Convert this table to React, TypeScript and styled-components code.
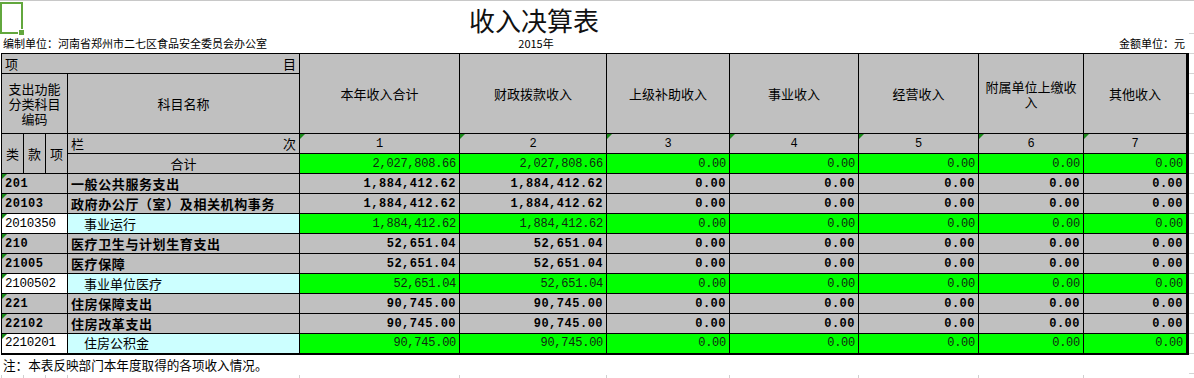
import styled, { createGlobalStyle } from "styled-components";

const GREY = "#c0c0c0";
const GREEN = "#00ff00";
const CYAN = "#ccffff";
const WHITE = "#ffffff";
const CJK = `"Noto Sans CJK SC", "Liberation Sans", sans-serif`;
const MONO = `"Liberation Mono", "Noto Sans CJK SC", monospace`;

const colWidths = [22, 22, 22, 232, 160, 147, 123, 129, 120, 105, 104];

const headers = [
    ["本年收入合计"],
    ["财政拨款收入"],
    ["上级补助收入"],
    ["事业收入"],
    ["经营收入"],
    ["附属单位上缴收", "入"],
    ["其他收入"],
];

type Row = {
    code: string;
    name: string;
    amount: string;
    leaf?: boolean;
};

const rows: Row[] = [
    {code: "201", name: "一般公共服务支出", amount: "1,884,412.62"},
    {code: "20103", name: "政府办公厅（室）及相关机构事务", amount: "1,884,412.62"},
    {code: "2010350", name: "事业运行", amount: "1,884,412.62", leaf: true},
    {code: "210", name: "医疗卫生与计划生育支出", amount: "52,651.04"},
    {code: "21005", name: "医疗保障", amount: "52,651.04"},
    {code: "2100502", name: "事业单位医疗", amount: "52,651.04", leaf: true},
    {code: "221", name: "住房保障支出", amount: "90,745.00"},
    {code: "22102", name: "住房改革支出", amount: "90,745.00"},
    {code: "2210201", name: "住房公积金", amount: "90,745.00", leaf: true},
];

const rowValues = (amount: string) => [amount, amount, "0.00", "0.00", "0.00", "0.00", "0.00"];

export default function App() {
    return (
        <>
            <GlobalStyle/>
            <Page>
                <Main>
                    <Selection/>
                    <Heading>
                        <span/>
                        <Title>收入决算表</Title>
                        <span/>
                    </Heading>
                    <Info>
                        <span>编制单位：河南省郑州市二七区食品安全委员会办公室</span>
                        <Year>2015年</Year>
                        <Unit>金额单位：元</Unit>
                    </Info>
                    <Sheet>
                        <colgroup>
                            {colWidths.map((w, i) => <Col key={i} $w={w}/>)}
                        </colgroup>
                        <tbody>
                        <Row $h={20}>
                            <Cell colSpan={4}>
                                <Split><span>项</span><span>目</span></Split>
                            </Cell>
                            {headers.map((h, i) => (
                                <Cell key={i} rowSpan={2} $align="center">
                                    <HeadText>
                                        {h.map((line, j) => <HeadLine key={j}>{line}</HeadLine>)}
                                    </HeadText>
                                </Cell>
                            ))}
                        </Row>
                        <Row $h={60}>
                            <Cell colSpan={3} $align="center">
                                <HeadText>
                                    <HeadLine>支出功能</HeadLine>
                                    <HeadLine>分类科目</HeadLine>
                                    <HeadLine>编码</HeadLine>
                                </HeadText>
                            </Cell>
                            <Cell $align="center">科目名称</Cell>
                        </Row>
                        <Row $h={20}>
                            <Cell rowSpan={2} $align="center" $tight>类</Cell>
                            <Cell rowSpan={2} $align="center" $tight>款</Cell>
                            <Cell rowSpan={2} $align="center" $tight>项</Cell>
                            <Cell>
                                <Split><span>栏</span><span>次</span></Split>
                            </Cell>
                            {headers.map((_, i) => (
                                <Cell key={i} $align="center" $mono $mark>{i + 1}</Cell>
                            ))}
                        </Row>
                        <Row $h={20}>
                            <Cell $align="center">合计</Cell>
                            {rowValues("2,027,808.66").map((v, i) => (
                                <Cell key={i} $bg={GREEN} $align="right" $mono $ink="#102810">{v}</Cell>
                            ))}
                        </Row>
                        {rows.map((r) => (
                            <Row $h={20} key={r.code}>
                                <Cell colSpan={3} $bg={r.leaf ? WHITE : GREY} $mono $bold={!r.leaf} $mark $big={r.leaf}>
                                    {r.code}
                                </Cell>
                                <Cell $bg={r.leaf ? CYAN : GREY} $bold={!r.leaf} $indent={r.leaf ? 16 : 3}>
                                    {r.name}
                                </Cell>
                                {rowValues(r.amount).map((v, i) => (
                                    <Cell key={i}
                                          $bg={r.leaf ? GREEN : GREY}
                                          $align="right"
                                          $mono
                                          $bold={!r.leaf}
                                          $ink={r.leaf ? "#102810" : "#000"}
                                    >
                                        {v}
                                    </Cell>
                                ))}
                            </Row>
                        ))}
                        </tbody>
                    </Sheet>
                    <Note>注：本表反映部门本年度取得的各项收入情况。</Note>
                    <Ticks>
                        {colWidths.map((_, i) => <Tick key={i}/>)}
                    </Ticks>
                </Main>
                <Margin/>
            </Page>
        </>
    );
}

const GlobalStyle = createGlobalStyle`
    html, body {
        margin: 0;
        padding: 0;
        background: #fff;
    }
    body {
        font-family: ${CJK};
        color: #000;
    }
`

const Page = styled.div`
    display: flex;
    width: 1194px;
    height: 378px;
    overflow: hidden;
    border-top: 1px solid #c8c8c8;
    box-sizing: border-box;
`

const Main = styled.div`
    position: relative;
    width: 1189px;
    flex-shrink: 0;
    padding-left: 1px;
    box-sizing: border-box;
`

const Margin = styled.div`
    flex: 1;
    background: repeating-linear-gradient(to bottom, transparent 0 19px, #d4d4d4 19px 20px);
    background-position: 0 13px;
`

const Selection = styled.div`
    position: absolute;
    left: 0;
    top: 1px;
    width: 19px;
    height: 28px;
    border: 2px solid #62a73d;

    &::after {
        content: "";
        position: absolute;
        right: -4px;
        bottom: -4px;
        width: 5px;
        height: 5px;
        background: #62a73d;
        border: 1px solid #fff;
    }
`

const Heading = styled.div`
    display: grid;
    grid-template-columns: 399px 268px 1fr;
    height: 32px;
    padding-top: 1px;
    box-sizing: border-box;
`

const Title = styled.div`
    font-size: 26px;
    line-height: 38px;
    height: 31px;
    margin-top: -1px;
    text-align: center;
    font-weight: 400;
    color: #111;
`

const Info = styled.div`
    display: grid;
    grid-template-columns: 399px 268px 1fr;
    height: 20px;
    align-items: center;
    font-size: 11px;
    padding-left: 2px;
    padding-right: 4px;
`

const Year = styled.span`
    text-align: center;
`

const Unit = styled.span`
    text-align: right;
`

const Sheet = styled.table`
    border-collapse: collapse;
    table-layout: fixed;
    width: 1186px;
    border-right: 3px solid #000;
    border-bottom: 2px solid #000;
`

const Col = styled.col<{ $w: number }>`
    width: ${p => p.$w}px;
`

const Row = styled.tr<{ $h: number }>`
    height: ${p => p.$h}px;
`

const Cell = styled.td<{
    $bg?: string;
    $align?: "left" | "center" | "right";
    $bold?: boolean;
    $mono?: boolean;
    $indent?: number;
    $mark?: boolean;
    $ink?: string;
    $tight?: boolean;
    $big?: boolean;
}>`
    position: relative;
    border: 1px solid #000;
    padding-top: 0;
    padding-bottom: 0;
    padding-left: ${p => p.$tight ? 0 : (p.$indent ?? 3)}px;
    padding-right: ${p => p.$tight ? 0 : 3}px;
    background: ${p => p.$bg ?? GREY};
    color: ${p => p.$ink ?? "#000"};
    text-align: ${p => p.$align ?? "left"};
    vertical-align: middle;
    white-space: nowrap;
    overflow: hidden;
    font-family: ${p => p.$mono ? MONO : CJK};
    font-size: ${p => p.$big ? "12.5px" : p.$mono ? "12px" : "13px"};
    font-weight: ${p => p.$bold ? 700 : 400};
    letter-spacing: ${p => p.$mono ? (p.$bold ? "0.5px" : "-0.25px") : (p.$bold ? "0.6px" : "0")};
    line-height: 16px;

    &::before {
        content: "";
        display: ${p => p.$mark ? "block" : "none"};
        position: absolute;
        left: 0;
        top: 0;
        border-top: 5px solid #1a8a1a;
        border-right: 5px solid transparent;
    }
`

const Split = styled.div`
    display: flex;
    justify-content: space-between;
`

const HeadText = styled.div`
    display: flex;
    flex-direction: column;
    align-items: center;
`

const HeadLine = styled.div`
    height: 15px;
    line-height: 15px;
    overflow: visible;
`

const Note = styled.div`
    height: 20px;
    line-height: 20px;
    font-size: 12.6px;
    padding-left: 2px;
`

const Ticks = styled.div`
    display: grid;
    grid-template-columns: ${colWidths.map(w => `${w}px`).join(" ")};
    height: 4px;
`

const Tick = styled.div`
    border-left: 1px solid #d0d0d0;
`
